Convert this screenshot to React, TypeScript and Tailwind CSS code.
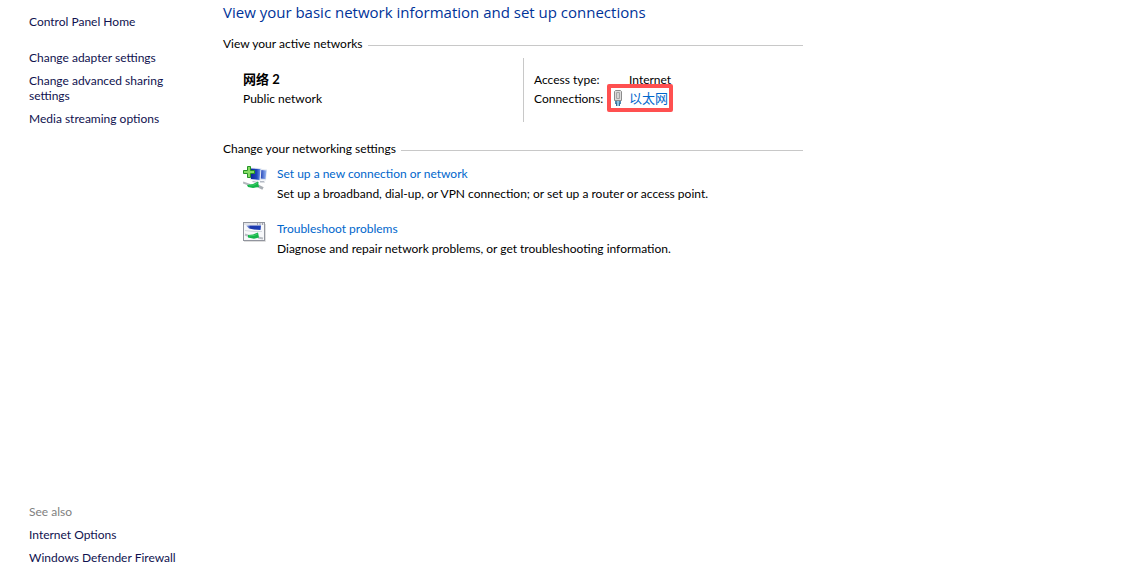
import type { ReactNode } from 'react';

const tasks = ['Change adapter settings', 'Change advanced sharing settings', 'Media streaming options'];
const related = ['Internet Options', 'Windows Defender Firewall'];

const EthernetIcon = () => (
    <svg width="10" height="17" viewBox="0 0 10 17" aria-hidden="true">
        <path d="M1.5 1.5 L2.5 .5 H7.5 L8.5 1.5 V10.5 H1.5 Z" fill="#dcdcdc" stroke="#8c8c8c" />
        <path d="M3.5 2.5 H6.5 V8.5 H3.5 Z" fill="#f8f8f8" stroke="#a5a5a5" />
        <path d="M5 3 V8" stroke="#b0b0b0" />
        <path d="M2 11 H8 V14 H2 Z" fill="#4e87ad" />
        <path d="M3.5 13 V16 M6.5 13 V16" stroke="#376e96" />
        <path d="M4 11 H6 V16 H4 Z" fill="#8dc4e2" />
    </svg>
);

const NewConnectionIcon = () => (
    <svg width="24" height="24" viewBox="0 0 24 24" aria-hidden="true">
        <defs>
            <linearGradient id="screen" x1="0" y1="0" x2="1" y2="0">
                <stop offset="0" stopColor="#0b1f96" />
                <stop offset=".65" stopColor="#2047bd" />
                <stop offset="1" stopColor="#6f98e8" />
            </linearGradient>
            <linearGradient id="screenBack" x1="0" y1="0" x2="1" y2="0">
                <stop offset="0" stopColor="#1e3fb4" />
                <stop offset="1" stopColor="#9dbcf6" />
            </linearGradient>
        </defs>
        <path d="M17 3 L24 3.5 L23 14.5 L16 14 Z" fill="#dfe5f0" />
        <path d="M18 4 L23.5 4.5 L22.5 13 L17.5 12.5 Z" fill="url(#screenBack)" />
        <path d="M6 1.5 L18.5 2 L17.5 15.5 L7 14 Z" fill="#e8ecf5" />
        <path d="M7 2.5 L17.5 3 L16.5 14 L8 13 Z" fill="url(#screen)" />
        <path d="M10 15 L16 16 L16 17 L9 16 Z M17 15 L21 15 L22 16.5 L17 16.5 Z" fill="#b4bac4" />
        <path d="M0 16.5 L7 19" stroke="#b3b8bd" strokeWidth="2" />
        <path d="M15 20 L20 22.5" stroke="#a8adb3" strokeWidth="3" />
        <path d="M4 19 L10 18 L15 15.5 L16 21 L10 22 L5 21 Z" fill="#14b549" />
        <path d="M6 19 L11 19 L14.5 17" fill="none" stroke="#3fce6b" />
        <path
            d="M4.5 .5 H7.5 V4.5 H11.5 V7.5 H7.5 V11.5 H4.5 V7.5 H.5 V4.5 H4.5 Z"
            fill="#86dc62"
            stroke="#259327"
        />
    </svg>
);

const TroubleshootIcon = () => (
    <svg width="24" height="22" viewBox="0 0 24 22" aria-hidden="true">
        <defs>
            <linearGradient id="panel" x1="0" y1="0" x2="1" y2="0">
                <stop offset="0" stopColor="#b9c9f0" />
                <stop offset=".3" stopColor="#1c37aa" />
                <stop offset="1" stopColor="#1d3fb8" />
            </linearGradient>
        </defs>
        <path d="M1 20.5 H22.5 V3" fill="none" stroke="#dedede" />
        <rect x=".5" y="1.5" width="21" height="18" fill="#f7f8fa" stroke="#92959e" />
        <path d="M1 3 H21" stroke="#e2e4e9" strokeWidth="2" />
        <path d="M14 3 H15 M16.5 3 H17.5 M19 3 H20" stroke="#666b78" />
        <path d="M3 4.5 H18 L17.5 9 L11 8.5 L6 7.5 Z" fill="url(#panel)" />
        <path d="M2 9.5 L11 10.5 L19 10.5" fill="none" stroke="#d5d9df" strokeWidth="1" />
        <path d="M2 13.5 L7 15.5 M15 16.5 L20 17.5" stroke="#b9bdc3" strokeWidth="2" />
        <path d="M5 14 L10 13.5 L15 11.5 L16 16.5 L11 17.8 L5 16.5 Z" fill="#14b549" />
        <path d="M6 14.8 L11 14.5 L14.5 13" fill="none" stroke="#3fce6b" />
    </svg>
);

const SectionTitle = ({ children }: { children: ReactNode }) => (
    <div className="flex items-center gap-[5px]">
        <h2>{children}</h2>
        <div className="mt-[3px] h-px flex-1 bg-[#c8c8c8]" />
    </div>
);

const Setting = ({ icon, title, text }: { icon: ReactNode; title: string; text: string }) => (
    <li className="flex items-start gap-[10px]">
        <div className="w-6 shrink-0">{icon}</div>
        <div className="flex flex-col gap-[5px]">
            <a href="#" className="text-[#0066cc] hover:underline">
                {title}
            </a>
            <p>{text}</p>
        </div>
    </li>
);

export default function App() {
    return (
        <div className="flex min-h-screen bg-white font-[Lato,'Noto_Sans_CJK_SC',sans-serif] text-[12px] leading-[15px] text-black">
            <aside className="flex w-[223px] shrink-0 flex-col justify-between pt-[14px] pr-12 pb-5 pl-[29px] text-[#10124f]">
                <nav>
                    <a href="#" className="hover:underline">
                        Control Panel Home
                    </a>
                    <ul className="mt-[21px] flex flex-col gap-2">
                        {tasks.map((task) => (
                            <li key={task}>
                                <a href="#" className="hover:underline">
                                    {task}
                                </a>
                            </li>
                        ))}
                    </ul>
                </nav>
                <nav>
                    <h2 className="text-[#808080]">See also</h2>
                    <ul className="mt-2 flex flex-col gap-2">
                        {related.map((item) => (
                            <li key={item}>
                                <a href="#" className="whitespace-nowrap hover:underline">
                                    {item}
                                </a>
                            </li>
                        ))}
                    </ul>
                </nav>
            </aside>
            <main className="max-w-[580px] flex-1 pt-[2px]">
                <h1 className="font-['Open_Sans',sans-serif] text-[15px] leading-5 text-[#003399]">
                    View your basic network information and set up connections
                </h1>
                <section className="mt-[14px]">
                    <SectionTitle>View your active networks</SectionTitle>
                    <div className="mt-[7px] flex">
                        <div className="flex w-[300px] flex-col gap-1 pt-[14px] pl-5">
                            <h3 className="text-[13px] font-bold">网络 2</h3>
                            <p>Public network</p>
                        </div>
                        <dl className="grid h-16 grid-cols-[95px_auto] content-start gap-y-1 border-l border-[#c8c8c8] pt-[14px] pl-[10px]">
                            <dt>Access type:</dt>
                            <dd>Internet</dd>
                            <dt>Connections:</dt>
                            <dd>
                                <a href="#" className="relative flex w-fit items-center text-[13px] text-[#0066cc]">
                                    <span className="absolute -left-4">
                                        <EthernetIcon />
                                    </span>
                                    以太网
                                    <span className="absolute -top-[7px] -right-[5px] -bottom-[6px] -left-[22px] rounded-[2px] border-4 border-[#ff5050]" />
                                </a>
                            </dd>
                        </dl>
                    </div>
                </section>
                <section className="mt-[19px]">
                    <SectionTitle>Change your networking settings</SectionTitle>
                    <ul className="mt-[10px] flex flex-col gap-5 pl-5">
                        <Setting
                            icon={<NewConnectionIcon />}
                            title="Set up a new connection or network"
                            text="Set up a broadband, dial-up, or VPN connection; or set up a router or access point."
                        />
                        <Setting
                            icon={<TroubleshootIcon />}
                            title="Troubleshoot problems"
                            text="Diagnose and repair network problems, or get troubleshooting information."
                        />
                    </ul>
                </section>
            </main>
        </div>
    );
}
